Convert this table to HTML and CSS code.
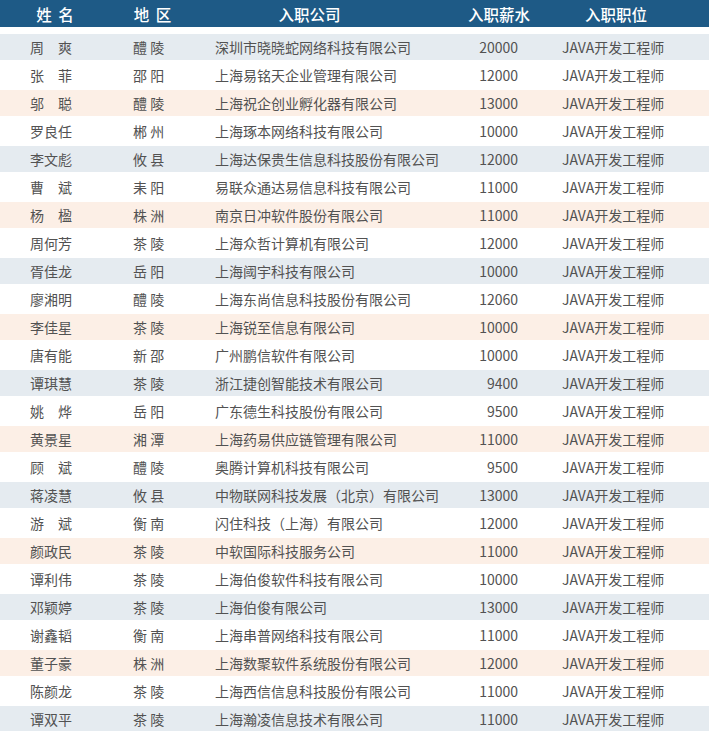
FILE: index.html
```html
<!DOCTYPE html>
<html lang="zh-CN">
<head>
<meta charset="utf-8">
<title>入职名单</title>
<link rel="stylesheet" href="styles.css">
</head>
<body>
<div class="table">
  <div class="row head">
    <div class="c1">姓 名</div>
    <div class="c2">地 区</div>
    <div class="c3">入职公司</div>
    <div class="c4">入职薪水</div>
    <div class="c5">入职职位</div>
  </div>
  <div class="rows">
    <div class="row blue"><div class="c1">周　爽</div><div class="c2">醴 陵</div><div class="c3">深圳市晓晓蛇网络科技有限公司</div><div class="c4">20000</div><div class="c5">JAVA开发工程师</div></div>
    <div class="row"><div class="c1">张　菲</div><div class="c2">邵 阳</div><div class="c3">上海易铭天企业管理有限公司</div><div class="c4">12000</div><div class="c5">JAVA开发工程师</div></div>
    <div class="row peach"><div class="c1">邬　聪</div><div class="c2">醴 陵</div><div class="c3">上海祝企创业孵化器有限公司</div><div class="c4">13000</div><div class="c5">JAVA开发工程师</div></div>
    <div class="row"><div class="c1">罗良任</div><div class="c2">郴 州</div><div class="c3">上海琢本网络科技有限公司</div><div class="c4">10000</div><div class="c5">JAVA开发工程师</div></div>
    <div class="row blue"><div class="c1">李文彪</div><div class="c2">攸 县</div><div class="c3">上海达保贵生信息科技股份有限公司</div><div class="c4">12000</div><div class="c5">JAVA开发工程师</div></div>
    <div class="row"><div class="c1">曹　斌</div><div class="c2">耒 阳</div><div class="c3">易联众通达易信息科技有限公司</div><div class="c4">11000</div><div class="c5">JAVA开发工程师</div></div>
    <div class="row peach"><div class="c1">杨　楹</div><div class="c2">株 洲</div><div class="c3">南京日冲软件股份有限公司</div><div class="c4">11000</div><div class="c5">JAVA开发工程师</div></div>
    <div class="row"><div class="c1">周何芳</div><div class="c2">茶 陵</div><div class="c3">上海众哲计算机有限公司</div><div class="c4">12000</div><div class="c5">JAVA开发工程师</div></div>
    <div class="row blue"><div class="c1">胥佳龙</div><div class="c2">岳 阳</div><div class="c3">上海阈宇科技有限公司</div><div class="c4">10000</div><div class="c5">JAVA开发工程师</div></div>
    <div class="row"><div class="c1">廖湘明</div><div class="c2">醴 陵</div><div class="c3">上海东尚信息科技股份有限公司</div><div class="c4">12060</div><div class="c5">JAVA开发工程师</div></div>
    <div class="row peach"><div class="c1">李佳星</div><div class="c2">茶 陵</div><div class="c3">上海锐至信息有限公司</div><div class="c4">10000</div><div class="c5">JAVA开发工程师</div></div>
    <div class="row"><div class="c1">唐有能</div><div class="c2">新 邵</div><div class="c3">广州鹏信软件有限公司</div><div class="c4">10000</div><div class="c5">JAVA开发工程师</div></div>
    <div class="row blue"><div class="c1">谭琪慧</div><div class="c2">茶 陵</div><div class="c3">浙江捷创智能技术有限公司</div><div class="c4">9400</div><div class="c5">JAVA开发工程师</div></div>
    <div class="row"><div class="c1">姚　烨</div><div class="c2">岳 阳</div><div class="c3">广东德生科技股份有限公司</div><div class="c4">9500</div><div class="c5">JAVA开发工程师</div></div>
    <div class="row peach"><div class="c1">黄景星</div><div class="c2">湘 潭</div><div class="c3">上海药易供应链管理有限公司</div><div class="c4">11000</div><div class="c5">JAVA开发工程师</div></div>
    <div class="row"><div class="c1">顾　斌</div><div class="c2">醴 陵</div><div class="c3">奥腾计算机科技有限公司</div><div class="c4">9500</div><div class="c5">JAVA开发工程师</div></div>
    <div class="row blue"><div class="c1">蒋凌慧</div><div class="c2">攸 县</div><div class="c3">中物联网科技发展（北京）有限公司</div><div class="c4">13000</div><div class="c5">JAVA开发工程师</div></div>
    <div class="row"><div class="c1">游　斌</div><div class="c2">衡 南</div><div class="c3">闪住科技（上海）有限公司</div><div class="c4">12000</div><div class="c5">JAVA开发工程师</div></div>
    <div class="row peach"><div class="c1">颜政民</div><div class="c2">茶 陵</div><div class="c3">中软国际科技服务公司</div><div class="c4">11000</div><div class="c5">JAVA开发工程师</div></div>
    <div class="row"><div class="c1">谭利伟</div><div class="c2">茶 陵</div><div class="c3">上海伯俊软件科技有限公司</div><div class="c4">10000</div><div class="c5">JAVA开发工程师</div></div>
    <div class="row blue"><div class="c1">邓颖婷</div><div class="c2">茶 陵</div><div class="c3">上海伯俊有限公司</div><div class="c4">13000</div><div class="c5">JAVA开发工程师</div></div>
    <div class="row"><div class="c1">谢鑫韬</div><div class="c2">衡 南</div><div class="c3">上海串普网络科技有限公司</div><div class="c4">11000</div><div class="c5">JAVA开发工程师</div></div>
    <div class="row peach"><div class="c1">董子豪</div><div class="c2">株 洲</div><div class="c3">上海数聚软件系统股份有限公司</div><div class="c4">12000</div><div class="c5">JAVA开发工程师</div></div>
    <div class="row"><div class="c1">陈颜龙</div><div class="c2">茶 陵</div><div class="c3">上海西信信息科技股份有限公司</div><div class="c4">11000</div><div class="c5">JAVA开发工程师</div></div>
    <div class="row blue"><div class="c1">谭双平</div><div class="c2">茶 陵</div><div class="c3">上海瀚凌信息技术有限公司</div><div class="c4">11000</div><div class="c5">JAVA开发工程师</div></div>
  </div>
</div>
</body>
</html>
```

FILE: styles.css
```css
html, body {
  margin: 0;
  padding: 0;
  background: #ffffff;
}
body {
  width: 709px;
  height: 731px;
  overflow: hidden;
  font-family: "Noto Sans CJK SC", "Noto Sans", sans-serif;
}
.table {
  display: flex;
  flex-direction: column;
}
.row {
  display: grid;
  grid-template-columns: 110px 85px 250px 95px 1fr;
  height: 26px;
  line-height: 26px;
  font-size: 14px;
  color: #525252;
  white-space: nowrap;
}
.rows {
  display: flex;
  flex-direction: column;
  gap: 2px;
  padding-top: 7px;
}
.row.blue { background: #e5ebf0; }
.row.peach { background: #fcefe6; }

.row .c1 { padding-left: 30px; }
.row .c2 { padding-left: 23px; }
.row .c3 { padding-left: 20px; }
.row .c4 { padding-right: 22px; text-align: right; }
.row .c5 { padding-left: 22px; }

.row.head {
  height: 27px;
  line-height: 29px;
  background: #1e5a86;
  color: #ffffff;
  font-size: 15.5px;
  font-weight: 500;
}
.row.head div { text-align: center; padding: 0; word-spacing: 3px; }
.row.head .c3 { padding-right: 21px; }
.row.head .c4 { padding-left: 13px; }
.row.head .c5 { padding-right: 17px; }
```
